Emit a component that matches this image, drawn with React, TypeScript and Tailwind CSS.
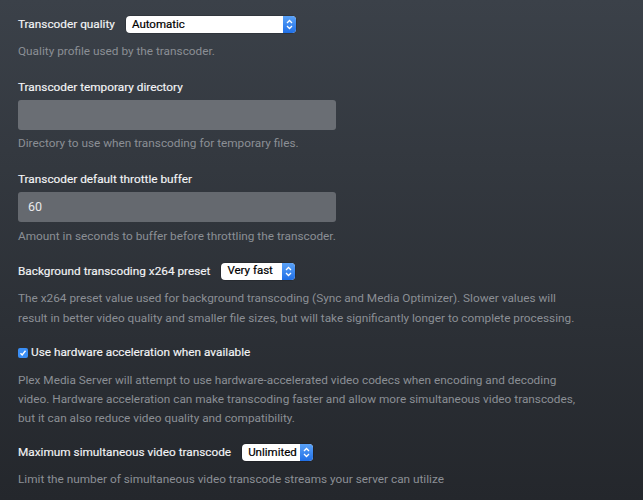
import React from "react";

const Stepper = () => (
  <span className="flex h-full w-[13px] shrink-0 items-center justify-center rounded-r-[4px] bg-gradient-to-b from-[#5aa2f8] to-[#1f6fe6]">
    <svg width="7" height="11" viewBox="0 0 7 11" fill="none" stroke="white" strokeWidth="1.3">
      <path d="M1 4 L3.5 1.5 L6 4" />
      <path d="M1 7 L3.5 9.5 L6 7" />
    </svg>
  </span>
);

const Select = ({ value, width }: { value: string; width: string }) => (
  <div className={`flex h-[17px] items-center justify-between rounded-[4px] bg-white shadow-[0_0_0_0.5px_rgba(0,0,0,0.3)] ${width}`}>
    <span className="pl-[6px] text-[11.5px] text-black [-webkit-text-stroke:0.2px_black]">{value}</span>
    <Stepper />
  </div>
);

const Help = ({ className, children }: { className: string; children: React.ReactNode }) => (
  <p className={`text-[11.8px] leading-[19px] text-[#8b8f95] ${className}`}>{children}</p>
);

const Label = ({ className = "", children }: { className?: string; children: React.ReactNode }) => (
  <div className={`text-[11.8px] leading-[17px] text-[#f3f4f6] [-webkit-text-stroke:0.15px_#f3f4f6] ${className}`}>
    {children}
  </div>
);

export default function App() {
  return (
    <div
      className="h-[500px] w-[643px] overflow-hidden bg-gradient-to-b from-[#3b4149] to-[#24272c] px-[18px] pt-[16px]"
      style={{ fontFamily: "Roboto, sans-serif" }}
    >
      <div className="flex h-[17px] items-center gap-[11px]">
        <Label>Transcoder quality</Label>
        <Select value="Automatic" width="w-[170px]" />
      </div>
      <Help className="mt-[8.5px]">Quality profile used by the transcoder.</Help>

      <Label className="mt-[18px]">Transcoder temporary directory</Label>
      <div className="mt-[4.5px] h-[30px] w-[318px] rounded-[3px] bg-[#6a6e74]" />
      <Help className="mt-[3.5px]">Directory to use when transcoding for temporary files.</Help>

      <Label className="mt-[18px]">Transcoder default throttle buffer</Label>
      <div className="mt-[4.5px] flex h-[30px] w-[318px] items-center rounded-[3px] bg-[#65696f] pl-[10px] text-[12.5px] text-[#e8e9eb]">
        60
      </div>
      <Help className="mt-[4.5px]">Amount in seconds to buffer before throttling the transcoder.</Help>

      <div className="mt-[17px] flex h-[17px] items-center gap-[11px]">
        <Label>Background transcoding x264 preset</Label>
        <Select value="Very fast" width="w-[74px]" />
      </div>
      <Help className="mt-[8.5px] leading-[20px]">
        The x264 preset value used for background transcoding (Sync and Media Optimizer). Slower values will
        <br />
        result in better video quality and smaller file sizes, but will take significantly longer to complete processing.
      </Help>

      <div className="mt-[16px] flex h-[17px] items-center gap-[3px]">
        <span className="flex h-[10px] w-[10px] items-center justify-center rounded-[2px] bg-[#3a8ef5]">
          <svg width="8" height="8" viewBox="0 0 8 8" fill="none" stroke="white" strokeWidth="1.4">
            <path d="M1.5 4.2 L3.2 6 L6.5 1.8" />
          </svg>
        </span>
        <Label>Use hardware acceleration when available</Label>
      </div>
      <Help className="mt-[10px] leading-[18.5px]">
        Plex Media Server will attempt to use hardware-accelerated video codecs when encoding and decoding
        <br />
        video. Hardware acceleration can make transcoding faster and allow more simultaneous video transcodes,
        <br />
        but it can also reduce video quality and compatibility.
      </Help>

      <div className="mt-[16px] flex h-[17px] items-center gap-[11px]">
        <Label>Maximum simultaneous video transcode</Label>
        <Select value="Unlimited" width="w-[71px]" />
      </div>
      <Help className="mt-[9px]">Limit the number of simultaneous video transcode streams your server can utilize</Help>
    </div>
  );
}
